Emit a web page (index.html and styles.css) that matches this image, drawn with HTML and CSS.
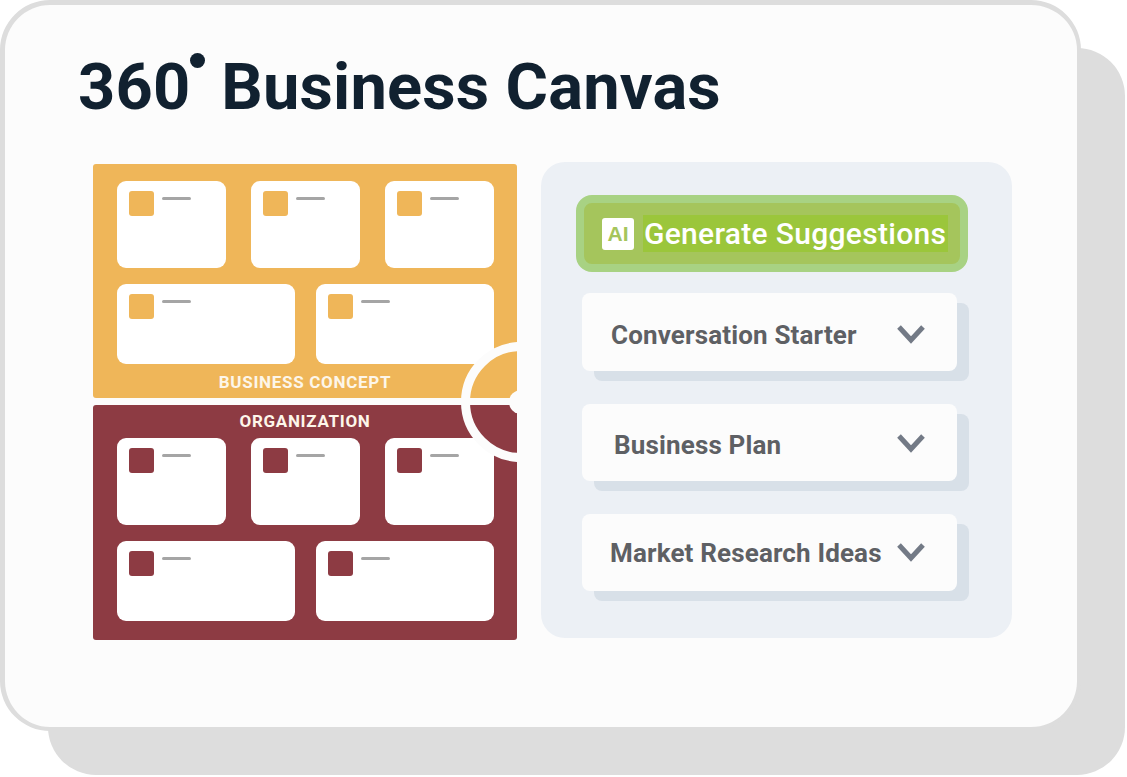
FILE: index.html
```html
<!DOCTYPE html>
<html lang="en">
<head>
    <meta charset="UTF-8">
    <meta name="viewport" content="width=device-width, initial-scale=1.0">
    <title>360 Business Canvas</title>
    <link rel="stylesheet" href="styles.css">
</head>
<body>
    <div class="canvas-card">
        <h1 class="title">360<span class="degree"></span>Business Canvas</h1>
        <div class="content">
            <div class="board">
                <section class="panel panel-concept">
                    <div class="tile-row">
                        <div class="tile"><span class="tile-icon"></span><span class="tile-bar"></span></div>
                        <div class="tile"><span class="tile-icon"></span><span class="tile-bar"></span></div>
                        <div class="tile"><span class="tile-icon"></span><span class="tile-bar"></span></div>
                    </div>
                    <div class="tile-row tile-row-wide">
                        <div class="tile"><span class="tile-icon"></span><span class="tile-bar"></span></div>
                        <div class="tile"><span class="tile-icon"></span><span class="tile-bar"></span></div>
                    </div>
                    <div class="panel-label">BUSINESS CONCEPT</div>
                </section>
                <section class="panel panel-org">
                    <div class="panel-label">ORGANIZATION</div>
                    <div class="tile-row">
                        <div class="tile"><span class="tile-icon"></span><span class="tile-bar"></span></div>
                        <div class="tile"><span class="tile-icon"></span><span class="tile-bar"></span></div>
                        <div class="tile"><span class="tile-icon"></span><span class="tile-bar"></span></div>
                    </div>
                    <div class="tile-row tile-row-wide">
                        <div class="tile"><span class="tile-icon"></span><span class="tile-bar"></span></div>
                        <div class="tile"><span class="tile-icon"></span><span class="tile-bar"></span></div>
                    </div>
                </section>
                <div class="ring"><span class="ring-dot"></span></div>
            </div>
            <aside class="side">
                <div class="generate">
                    <span class="ai-badge">AI</span>
                    <span class="generate-text">Generate Suggestions</span>
                </div>
                <div class="option option-a">
                    <span class="option-text">Conversation Starter</span>
                    <svg class="chevron" viewBox="0 0 30 20"><path d="M3 3l12 13L27 3"/></svg>
                </div>
                <div class="option option-b">
                    <span class="option-text">Business Plan</span>
                    <svg class="chevron" viewBox="0 0 30 20"><path d="M3 3l12 13L27 3"/></svg>
                </div>
                <div class="option option-c">
                    <span class="option-text">Market Research Ideas</span>
                    <svg class="chevron" viewBox="0 0 30 20"><path d="M3 3l12 13L27 3"/></svg>
                </div>
            </aside>
        </div>
    </div>
</body>
</html>
```

FILE: styles.css
```css
body, html {
    margin: 0;
    padding: 0;
    height: 100%;
    background-color: #ffffff;
    overflow: hidden;
}
.canvas-card {
    box-sizing: border-box;
    width: 1081px;
    height: 731px;
    padding: 48px 0 0 73px;
    background-color: #fcfcfc;
    border-style: solid;
    border-color: #dddddd;
    border-width: 5px 4px 4px 5px;
    border-radius: 50px;
    box-shadow: 46px 46px 0 -2px #dddddd;
}
.title {
    margin: 0;
    height: 64px;
    font-family: "Roboto", sans-serif;
    font-weight: 700;
    font-size: 65px;
    letter-spacing: 0.15px;
    line-height: 60px;
    color: #112130;
    white-space: nowrap;
}
.degree {
    display: inline-block;
    width: 15px;
    height: 15px;
    margin: 0 16px 0 0;
    vertical-align: 41px;
    background-color: #112130;
    border-radius: 50%;
}
.content {
    display: flex;
    align-items: flex-start;
    gap: 24px;
    margin: 45px 0 0 15px;
}

/* left board */
.board {
    position: relative;
    width: 424px;
    margin-top: 2px;
    overflow: hidden;
}
.panel {
    box-sizing: border-box;
    height: 234px;
    padding: 0 24px;
    border-radius: 3px;
}
.panel-concept {
    padding-top: 17px;
    margin-bottom: 7px;
    background-color: #efb659;
    color: #efb659;
}
.panel-org {
    height: 235px;
    background-color: #8d3b43;
    color: #8d3b43;
}
.panel-label {
    font-family: "Roboto", sans-serif;
    font-weight: 700;
    font-size: 17px;
    letter-spacing: 0.7px;
    text-align: center;
    color: #fdf6ea;
}
.panel-concept .panel-label {
    line-height: 37px;
}
.panel-org .panel-label {
    line-height: 33px;
}
.tile-row {
    display: flex;
    justify-content: space-between;
    width: 377px;
}
.tile {
    box-sizing: border-box;
    display: flex;
    align-items: flex-start;
    gap: 8px;
    width: 109px;
    height: 87px;
    padding: 10px 12px;
    background-color: #ffffff;
    border-radius: 9px;
}
.tile-row-wide {
    margin-top: 16px;
}
.tile-row-wide .tile {
    width: 178px;
    height: 80px;
}
.tile-icon {
    width: 25px;
    height: 25px;
    background-color: currentColor;
    border-radius: 3px;
}
.tile-bar {
    width: 29px;
    height: 3px;
    margin-top: 6px;
    background-color: #a5a5a5;
    border-radius: 2px;
}
.ring {
    position: absolute;
    left: 368px;
    top: 178px;
    box-sizing: border-box;
    width: 120px;
    height: 120px;
    border: 9px solid #fcfcfc;
    border-radius: 50%;
    background: linear-gradient(#efb659 0 47px, #fcfcfc 47px 54px, #8d3b43 54px);
}
.ring-dot {
    position: absolute;
    left: 39px;
    top: 39px;
    width: 24px;
    height: 24px;
    background-color: #fcfcfc;
    border-radius: 50%;
}

/* right side */
.side {
    box-sizing: border-box;
    width: 471px;
    height: 476px;
    padding: 33px 0 0 35px;
    background-color: #ecf0f5;
    border-radius: 24px;
}
.generate {
    box-sizing: border-box;
    display: flex;
    align-items: center;
    width: 392px;
    height: 77px;
    padding-left: 18px;
    background-color: #a5c55c;
    border: 8px solid #a8d283;
    border-radius: 16px;
}
.ai-badge {
    display: flex;
    align-items: center;
    justify-content: center;
    width: 32px;
    height: 32px;
    background-color: #ffffff;
    border-radius: 3px;
    font-family: "Liberation Sans", sans-serif;
    font-weight: 700;
    font-size: 21px;
    color: #a5c55c;
}
.generate-text {
    width: 304px;
    margin-left: 9px;
    padding-left: 1px;
    font-family: "Roboto", sans-serif;
    font-weight: 500;
    font-size: 30px;
    letter-spacing: 0.3px;
    line-height: 37px;
    white-space: nowrap;
    color: #ffffff;
    background-color: #9bc63b;
}
.option {
    box-sizing: border-box;
    display: flex;
    align-items: center;
    justify-content: space-between;
    width: 375px;
    height: 77px;
    margin: 33px 0 0 6px;
    padding-right: 31px;
    background-color: #fcfcfc;
    border-radius: 8px;
    box-shadow: 12px 10px 0 #d8e0e8;
}
.generate + .option {
    height: 78px;
    margin-top: 21px;
}
.option-a {
    padding-left: 29px;
    padding-top: 6px;
}
.option-b {
    padding-left: 32px;
    padding-top: 4px;
}
.option-c {
    padding-left: 28px;
    padding-top: 1px;
}
.option-text {
    font-family: "Roboto", sans-serif;
    font-weight: 700;
    font-size: 26px;
    letter-spacing: 0.15px;
    white-space: nowrap;
    color: #5e6064;
}
.chevron {
    width: 30px;
    height: 20px;
    margin-top: -3px;
    fill: none;
    stroke: #737a86;
    stroke-width: 5;
}
```
